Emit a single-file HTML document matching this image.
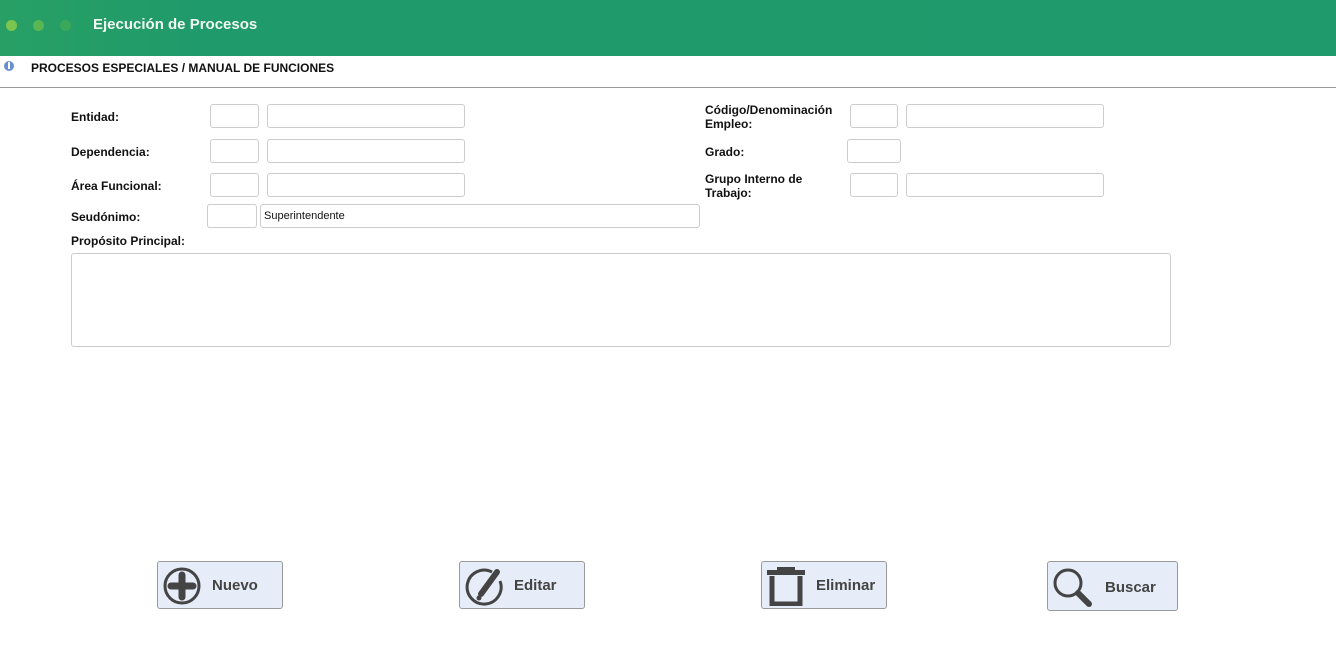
<!DOCTYPE html>
<html><head><meta charset="utf-8"><style>
*{box-sizing:border-box;margin:0;padding:0}
body{width:1336px;height:656px;background:#fff;font-family:"Liberation Sans",sans-serif;position:relative;overflow:hidden;color:#111}
.hdr{position:absolute;left:0;top:0;width:1336px;height:56px;background:linear-gradient(90deg,#28a065 0%,#1f9a6a 15%,#1e9a6c 100%)}
.dot{position:absolute;top:20px;width:11px;height:11px;border-radius:50%}
.title{position:absolute;left:93px;top:16px;color:#f1f8f2;font-weight:bold;font-size:15px}
.bc{position:absolute;left:31px;top:61px;font-size:12px;font-weight:bold}
.line{position:absolute;left:0;top:87px;width:1336px;height:1px;background:#999}
.lbl{position:absolute;font-size:12px;font-weight:bold;line-height:14px}
.in{position:absolute;height:24px;border:1px solid #ccc;border-radius:3px;background:#fff;font-size:11px;padding:5px 3px}
.btn{position:absolute;top:561px;height:48px;border:1px solid #999;border-radius:3px;background:#e6ecf8;font-size:15px;font-weight:bold;color:#444}
.btn svg{position:absolute;left:4px;top:4px}
.btn span{position:absolute;top:15px}
</style></head><body>
<div class="hdr">
<div class="dot" style="left:6px;background:#7cc54e"></div>
<div class="dot" style="left:33px;background:#5ab553"></div>
<div class="dot" style="left:60px;background:#3aa95c"></div>
<div class="title">Ejecución de Procesos</div>
</div>
<svg style="position:absolute;left:3px;top:60px" width="12" height="12"><circle cx="6" cy="6" r="5" fill="#6a8fd0"/><rect x="5" y="2" width="2" height="7" fill="#fff"/></svg>
<div class="bc">PROCESOS ESPECIALES / MANUAL DE FUNCIONES</div>
<div class="line"></div>

<div class="lbl" style="left:71px;top:110px">Entidad:</div>
<div class="in" style="left:210px;top:104px;width:49px"></div>
<div class="in" style="left:267px;top:104px;width:198px"></div>
<div class="lbl" style="left:71px;top:145px">Dependencia:</div>
<div class="in" style="left:210px;top:139px;width:49px"></div>
<div class="in" style="left:267px;top:139px;width:198px"></div>
<div class="lbl" style="left:71px;top:179px">Área Funcional:</div>
<div class="in" style="left:210px;top:173px;width:49px"></div>
<div class="in" style="left:267px;top:173px;width:198px"></div>
<div class="lbl" style="left:71px;top:210px">Seudónimo:</div>
<div class="in" style="left:207px;top:204px;width:50px"></div>
<div class="in" style="left:260px;top:204px;width:440px">Superintendente</div>
<div class="lbl" style="left:71px;top:234px">Propósito Principal:</div>
<div class="in" style="left:71px;top:253px;width:1100px;height:94px"></div>

<div class="lbl" style="left:705px;top:103px">Código/Denominación<br>Empleo:</div>
<div class="in" style="left:850px;top:104px;width:48px"></div>
<div class="in" style="left:906px;top:104px;width:198px"></div>
<div class="lbl" style="left:705px;top:145px">Grado:</div>
<div class="in" style="left:847px;top:139px;width:54px"></div>
<div class="lbl" style="left:705px;top:172px">Grupo Interno de<br>Trabajo:</div>
<div class="in" style="left:850px;top:173px;width:48px"></div>
<div class="in" style="left:906px;top:173px;width:198px"></div>

<div class="btn" style="left:157px;width:126px"><svg width="40" height="40"><circle cx="20" cy="20" r="17" fill="none" stroke="#444" stroke-width="3"/><path d="M20 9v22M9 20h22" stroke="#444" stroke-width="7" stroke-linecap="round"/></svg><span style="left:54px">Nuevo</span></div>
<div class="btn" style="left:459px;width:126px"><svg width="40" height="40"><path d="M28 6A17 17 0 1 0 36 15" fill="none" stroke="#444" stroke-width="3"/><path d="M33 6L17 28" stroke="#444" stroke-width="6" stroke-linecap="round"/><circle cx="15" cy="32" r="2.5" fill="#444"/></svg><span style="left:54px">Editar</span></div>
<div class="btn" style="left:761px;width:126px"><svg width="40" height="40"><rect x="1" y="4" width="38" height="5" fill="#444"/><rect x="11" y="1" width="18" height="5" fill="#444"/><path d="M6 10v28h28V10" fill="none" stroke="#444" stroke-width="5"/></svg><span style="left:54px">Eliminar</span></div>
<div class="btn" style="left:1047px;width:131px;height:50px"><svg width="44" height="44"><circle cx="16" cy="17" r="13" fill="none" stroke="#444" stroke-width="3"/><path d="M26 27l11 11" stroke="#444" stroke-width="6" stroke-linecap="round"/></svg><span style="left:57px;top:17px">Buscar</span></div>
</body></html>
